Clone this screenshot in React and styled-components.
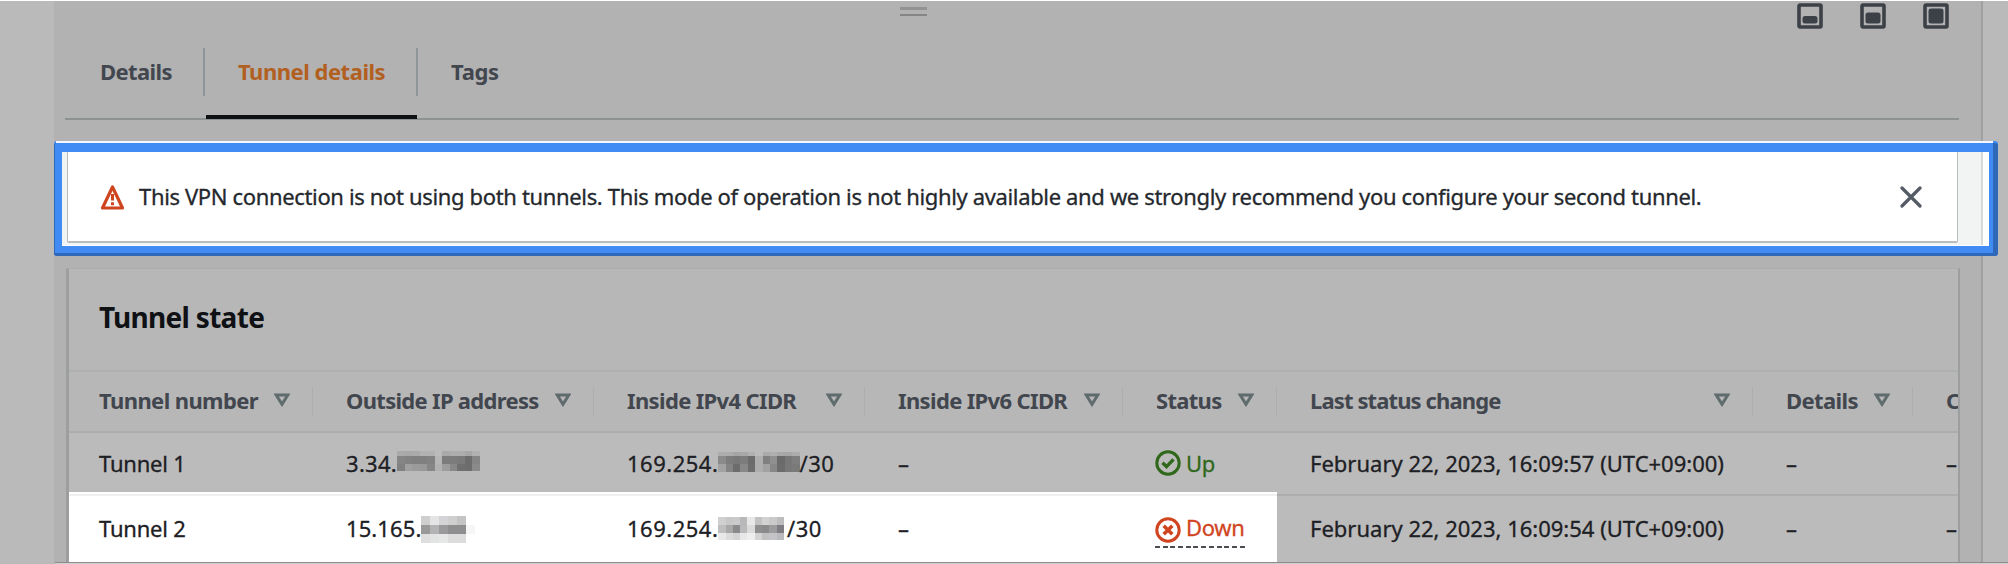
import React from 'react';
import styled, { createGlobalStyle, css } from 'styled-components';

const Global = createGlobalStyle`
  * { box-sizing: border-box; }
  body { margin: 0; background: #fff; }
`;

const Page = styled.div`
  position: relative;
  width: 2008px;
  height: 564px;
  overflow: hidden;
  padding-left: 54px;
  background: #bababa;
  border-top: 1px solid #fff;
  font-family: 'Noto Sans', 'Open Sans', sans-serif;
  font-size: 22px;
  color: #1d2024;
`;

const SplitPanel = styled.section`
  width: 1929px;
  height: 563px;
  background: #b2b2b2;
  border-right: 2px solid #9fa0a2;
  display: flex;
  flex-direction: column;
`;

const PanelTop = styled.header`
  height: 46px;
  flex: none;
  display: grid;
  grid-template-columns: 1fr auto;
  padding: 2px 32px 0 0;
`;

const DragHandle = styled.div`
  width: 27px;
  height: 9px;
  margin: 4px 0 0 846px;
  border-top: 3px solid #939393;
  border-bottom: 2px solid #858585;
`;

const SizeButtons = styled.div`
  display: flex;
  gap: 37px;
`;

const Tabs = styled.nav`
  display: flex;
  flex: none;
  height: 73px;
  margin: 0 22px 0 11px;
  border-bottom: 2px solid #8d9192;
`;

const Tab = styled.div`
  position: relative;
  height: 50px;
  padding-top: 6px;
  padding-left: ${(p) => p.$pad}px;
  width: ${(p) => p.$w}px;
  line-height: 36px;
  font-weight: 700;
  letter-spacing: ${(p) => p.$ls || 0}px;
  white-space: nowrap;
  color: ${(p) => (p.$active ? '#b2601f' : '#42474f')};
  ${(p) => p.$divider && css`
    &::before {
      content: '';
      position: absolute;
      right: 0;
      top: 1px;
      width: 2px;
      height: 48px;
      background: #8f9697;
    }
  `}
  ${(p) => p.$active && css`
    &::after {
      content: '';
      position: absolute;
      left: 1px;
      right: 1px;
      top: 68px;
      height: 4px;
      background: #0e1014;
    }
  `}
`;

const Highlight = styled.div`
  flex: none;
  position: relative;
  z-index: 1;
  display: flex;
  width: 1944px;
  height: 115px;
  margin-top: 21px;
  border: solid #418cf4;
  border-width: 11px 9px 10px 8px;
  border-radius: 3px;
  background: linear-gradient(90deg, #f2f3f3 1919px, #d5d9da 1919px, #d5d9da 1921px, #fff 1921px) padding-box;
  box-shadow: inset 0 -1px 0 #fff, inset -1px 0 0 #fff;
  &::before {
    content: '';
    position: absolute;
    inset: -9px -9px -10px -8px;
    border: solid #2f68b8;
    border-width: 0 5px 3px 1px;
    border-radius: 3px;
  }
  &::after {
    content: '';
    position: absolute;
    left: -6px;
    right: -4px;
    top: -11px;
    height: 2px;
    background: #f3f7ff;
  }
`;

const Alert = styled.div`
  display: flex;
  align-items: center;
  width: 1891px;
  height: 91px;
  margin-left: 5px;
  padding: 0 35px 0 32px;
  background: #fff;
  border: 1px solid #b6bec0;
  border-top: 0;
  border-bottom-width: 2px;
  border-radius: 0 0 2px 2px;
`;

const AlertText = styled.p`
  flex: 1;
  margin: 0 0 1px 14px;
  line-height: 30px;
  white-space: nowrap;
  letter-spacing: ${(p) => p.$ls}px;
  color: #24282d;
  -webkit-text-stroke: 0.3px currentColor;
`;

const Card = styled.div`
  flex: 1;
  width: 1894px;
  margin: 12px 0 0 12px;
  background: #b7b7b7;
  border: 2px solid #9c9ea0;
  border-left-width: 3px;
  border-top: 1px solid #acacac;
  border-bottom: 0;
  overflow: hidden;
`;

const CardTitle = styled.h2`
  height: 101px;
  margin: 0;
  padding: 28px 0 0 30px;
  font-size: 28px;
  line-height: 40px;
  font-weight: 700;
  letter-spacing: ${(p) => p.$ls}px;
  color: #0f1115;
`;

const Grid = styled.div`
  display: grid;
  grid-template-columns: 244px 281px 271px 258px 154px 476px 160px 45px;
  align-items: stretch;
  border-top: 2px solid ${(p) => (p.$head ? '#aeafaf' : '#adadad')};
  height: ${(p) => p.$h}px;
  background: ${(p) => (p.$head ? '#b7b7b7' : '#bbbbbb')};
`;

const HeadCell = styled.div`
  display: flex;
  align-items: center;
  justify-content: space-between;
  padding: 0 23px 4px 33px;
  font-weight: 700;
  letter-spacing: ${(p) => p.$ls}px;
  white-space: nowrap;
  overflow: hidden;
  color: #42464e;
  background: linear-gradient(#aeaeae, #aeaeae) right center / 1px 30px no-repeat;
  &:first-child { padding-left: 30px; }
  &:last-child { background: none; }
`;

const Cell = styled.div`
  display: flex;
  align-items: center;
  padding: 0 0 1px 33px;
  letter-spacing: ${(p) => p.$ls || 0}px;
  white-space: nowrap;
  overflow: hidden;
  background: ${(p) => (p.$lit ? '#fff' : 'transparent')};
  -webkit-text-stroke: 0.3px currentColor;
  &:first-child { padding-left: 30px; }
`;

const LitRow = styled(Grid)`
  position: relative;
  ${Cell} { padding-bottom: 4px; }
  &::before {
    content: '';
    position: absolute;
    left: 0;
    top: -4px;
    width: 1208px;
    height: 4px;
    background: linear-gradient(#fff 2px, #f0f0f0 2px);
  }
`;

const Mosaic = styled.span`
  display: grid;
  grid-template-columns: repeat(${(p) => p.$cols}, ${(p) => p.$w}px);
  grid-template-rows: ${(p) => p.$rows};
  margin: ${(p) => p.$m || 0};
`;

const Pixel = styled.i`
  background: ${(p) => p.$c};
`;

const Status = styled.span`
  display: flex;
  align-items: center;
  gap: 5px;
  margin-left: -1px;
  color: ${(p) => (p.$down ? '#d0451f' : '#2f681a')};
  ${(p) => p.$down && css`
    height: 34px;
    margin-top: 6px;
    padding-bottom: 3px;
    background: repeating-linear-gradient(90deg, #4a4d52 0 5px, transparent 5px 7.7px) left bottom / 100% 2px no-repeat;
  `}
`;

const Label = styled.span`
  position: relative;
  top: ${(p) => p.$dy || 0}px;
`;

const Floor = styled.div`
  position: absolute;
  left: 55px;
  right: 0;
  bottom: 0;
  height: 2px;
  background: linear-gradient(#8c8c90 1px, #d0d0d0 1px);
`;

const SizeIcon = ({ top }) => (
  <svg width="26" height="26" viewBox="0 0 26 26">
    <rect x="2" y="2" width="22" height="22" rx="1" fill="none" stroke="#3c4148" strokeWidth="3.6" />
    <rect x="5.5" y={top} width="15" height={20.5 - top} rx="2.5" fill="#3c4148" />
  </svg>
);

const SortIcon = () => (
  <svg width="16" height="14" viewBox="0 0 16 14">
    <path d="M2.2 2h11.6L8 11.3z" fill="none" stroke="#5f6b6d" strokeWidth="3" />
  </svg>
);

const WarningIcon = () => (
  <svg width="25" height="26" viewBox="0 0 24 26">
    <path d="M12 3L22 24H2z" fill="none" stroke="#cf4520" strokeWidth="3.2" strokeLinejoin="round" />
    <path d="M12 10v6.5M12 18.3v3" stroke="#cf4520" strokeWidth="3" />
  </svg>
);

const CloseIcon = () => (
  <svg width="22" height="22" viewBox="0 0 22 22">
    <path d="M2 2l18 18M20 2L2 20" stroke="#545b64" strokeWidth="3.2" strokeLinecap="round" />
  </svg>
);

const StatusIcon = ({ down }) => (
  <svg width="26" height="26" viewBox="0 0 26 26" fill="none" stroke="currentColor">
    <circle cx="13" cy="13" r="11.2" strokeWidth="3" />
    {down ? <path d="M8.7 8.7l8.6 8.6M17.3 8.7l-8.6 8.6" strokeWidth="3.6" /> : <path d="M7.5 12.8l4 3.8 7-7.2" strokeWidth="3.4" />}
  </svg>
);

const masks = {
  ipA: {
    w: 7.5, rows: '5px 8px 7px',
    cells: ['aaa', 'a8a8a8', 'aaa', 'b2b2b2', 'b2b2b2', 'bbb', 'a9a9a9', 'adadad', 'adadad', 'a6a6a6', 'b0b0b0',
      '858585', '828282', '808080', '808080', '828282', 'b6b6b6', '7c7c7c', '7c7c7c', '7a7a7a', '6c6c6c', '858585',
      '808080', 'a0a0a0', '9b9b9b', '999', '868686', 'b2b2b2', '9d9d9d', '888', '6f6f6f', '6d6d6d', '8a8a8a'],
    cols: 11, m: '-4px 0 0 0',
  },
  ipB: {
    w: 9, rows: '9px 9px 9px',
    cells: ['cfcfcf', 'e4e4e4', 'd4d4d6', 'cfcfcf', 'c4c4c4', 'ffffff', '999', 'b3b3b5', '9a9a9c', '8e8e90', '8e8e90', 'f6f6f6',
      'dedede', 'e2e4e4', 'e6e8e8', 'dcdcdc', 'dcdcdc', 'ffffff'],
    cols: 6, m: '3px 0 0 0',
  },
  cidrA: {
    w: 7.4, rows: '4px 8px 8px',
    cells: ['adadad', 'acacac', 'a4a4a4', 'a8a8a8', 'b0b0b0', 'bbb', 'aaa', 'b0b0b0', 'a8a8a8', 'a6a6a6', 'acacac',
      '8a8a8a', '7c7c7c', '787878', '7c7c7c', '6c6c6c', 'aeaeae', '808080', '909090', '6a6a6a', '777', '7e7e7e',
      'a2a2a2', '848484', '6c6c6c', '888', '6e6e6e', 'aeaeae', 'a2a2a2', '888', '6c6c6c', '787878', '7a7a7a'],
    cols: 11, m: '-3px 0 0 0',
  },
  cidrB: {
    w: 7.3, rows: '8px 8px 7px',
    cells: ['d0d0d0', 'c8c8c8', 'cacaca', 'b8b8ba', 'e8e8e8', 'c2c2c2', 'd2d2d2', 'cacaca', 'bdbdbd',
      'bebebe', 'a8a8a8', '8a8a8c', 'bababc', 'dadada', '8e8e90', '8a8a8c', '9c9c9e', '7e7e82',
      'e8e8e8', 'dcdcdc', 'd4d4d4', 'e8e8e8', 'eeeeee', 'd4d4d4', 'bfc1c3', 'c4c4c6', 'b8babc'],
    cols: 9, m: '0 3px 0 0',
  },
};

const Masked = ({ kind }) => {
  const { w, rows, cols, cells, m } = masks[kind];
  return (
    <Mosaic $w={w} $rows={rows} $cols={cols} $m={m}>
      {cells.map((c, i) => <Pixel key={i} $c={`#${c}`} />)}
    </Mosaic>
  );
};

const columns = [
  ['Tunnel number', -0.6],
  ['Outside IP address', -0.7],
  ['Inside IPv4 CIDR', -0.65],
  ['Inside IPv6 CIDR', -0.65],
  ['Status', -0.7],
  ['Last status change', -0.88],
  ['Details', -0.6],
  ['C', 0],
];

export default function App() {
  return (
    <>
      <Global />
      <Page>
        <SplitPanel>
          <PanelTop>
            <DragHandle />
            <SizeButtons>
              <SizeIcon top={13} />
              <SizeIcon top={9.5} />
              <SizeIcon top={5.5} />
            </SizeButtons>
          </PanelTop>
          <Tabs>
            <Tab $w={140} $pad={35} $divider $ls={-0.6}>Details</Tab>
            <Tab $w={213} $pad={33} $divider $active $ls={-0.48}>Tunnel details</Tab>
            <Tab $w={120} $pad={33} $ls={-0.3}>Tags</Tab>
          </Tabs>
          <Highlight>
            <Alert>
              <WarningIcon />
              <AlertText $ls={-0.35}>
                This VPN connection is not using both tunnels. This mode of operation is not highly available and we strongly recommend you configure your second tunnel.
              </AlertText>
              <CloseIcon />
            </Alert>
          </Highlight>
          <Card>
            <CardTitle $ls={-0.7}>Tunnel state</CardTitle>
            <Grid $head $h={61}>
              {columns.map(([name, spacing]) => (
                <HeadCell key={name} $ls={spacing}>
                  {name}
                  {name.length > 1 && <SortIcon />}
                </HeadCell>
              ))}
            </Grid>
            <Grid $h={63}>
              <Cell $ls={-0.2}>Tunnel 1</Cell>
              <Cell $ls={0.3}>3.34.<Masked kind="ipA" /></Cell>
              <Cell $ls={0.5}>169.254.<Masked kind="cidrA" />/30</Cell>
              <Cell>–</Cell>
              <Cell $ls={-0.3}><Status><StatusIcon />Up</Status></Cell>
              <Cell>February 22, 2023, 16:09:57 (UTC+09:00)</Cell>
              <Cell>–</Cell>
              <Cell>–</Cell>
            </Grid>
            <LitRow $h={70}>
              <Cell $lit $ls={-0.2}>Tunnel 2</Cell>
              <Cell $lit $ls={0.1}>15.165.<Masked kind="ipB" /></Cell>
              <Cell $lit $ls={0.5}>169.254.<Masked kind="cidrB" />/30</Cell>
              <Cell $lit>–</Cell>
              <Cell $lit $ls={-0.3}><Status $down><StatusIcon down /><Label $dy={-3}>Down</Label></Status></Cell>
              <Cell>February 22, 2023, 16:09:54 (UTC+09:00)</Cell>
              <Cell>–</Cell>
              <Cell>–</Cell>
            </LitRow>
          </Card>
        </SplitPanel>
        <Floor />
      </Page>
    </>
  );
}
